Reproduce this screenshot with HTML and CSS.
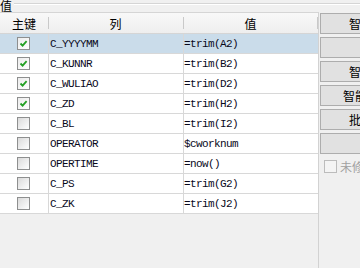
FILE: index.html
```html
<!DOCTYPE html>
<html lang="zh-CN">
<head>
  <meta charset="UTF-8">
  <meta name="viewport" content="width=device-width, initial-scale=1.0">
  <title>值</title>
  <link rel="stylesheet" href="styles.css">
</head>
<body>
  <div class="window">
    <!-- 分组标题 -->
    <div class="legend">
      <span class="legend-title">值</span>
      <span class="legend-line"></span>
    </div>

    <div class="main">
      <!-- 字段映射表 -->
      <div class="grid">
        <div class="grid-head">
          <div class="hcell">主键</div>
          <div class="hcell sep">列</div>
          <div class="hcell sep last">值</div>
        </div>

        <div class="grid-row selected">
          <div class="cell key"><span class="check on"><svg viewBox="0 0 11 11" width="11" height="11"><path d="M2.5 5.5 L4.6 7.6 L8.6 3.2" fill="none" stroke="#23a023" stroke-width="1.8"/></svg></span></div>
          <div class="cell col">C_YYYYMM</div>
          <div class="cell val">=trim(A2)</div>
        </div>
        <div class="grid-row">
          <div class="cell key"><span class="check on"><svg viewBox="0 0 11 11" width="11" height="11"><path d="M2.5 5.5 L4.6 7.6 L8.6 3.2" fill="none" stroke="#23a023" stroke-width="1.8"/></svg></span></div>
          <div class="cell col">C_KUNNR</div>
          <div class="cell val">=trim(B2)</div>
        </div>
        <div class="grid-row">
          <div class="cell key"><span class="check on"><svg viewBox="0 0 11 11" width="11" height="11"><path d="M2.5 5.5 L4.6 7.6 L8.6 3.2" fill="none" stroke="#23a023" stroke-width="1.8"/></svg></span></div>
          <div class="cell col">C_WULIAO</div>
          <div class="cell val">=trim(D2)</div>
        </div>
        <div class="grid-row">
          <div class="cell key"><span class="check on"><svg viewBox="0 0 11 11" width="11" height="11"><path d="M2.5 5.5 L4.6 7.6 L8.6 3.2" fill="none" stroke="#23a023" stroke-width="1.8"/></svg></span></div>
          <div class="cell col">C_ZD</div>
          <div class="cell val">=trim(H2)</div>
        </div>
        <div class="grid-row">
          <div class="cell key"><span class="check"></span></div>
          <div class="cell col">C_BL</div>
          <div class="cell val">=trim(I2)</div>
        </div>
        <div class="grid-row">
          <div class="cell key"><span class="check"></span></div>
          <div class="cell col">OPERATOR</div>
          <div class="cell val">$cworknum</div>
        </div>
        <div class="grid-row">
          <div class="cell key"><span class="check"></span></div>
          <div class="cell col">OPERTIME</div>
          <div class="cell val">=now()</div>
        </div>
        <div class="grid-row">
          <div class="cell key"><span class="check"></span></div>
          <div class="cell col">C_PS</div>
          <div class="cell val">=trim(G2)</div>
        </div>
        <div class="grid-row">
          <div class="cell key"><span class="check"></span></div>
          <div class="cell col">C_ZK</div>
          <div class="cell val">=trim(J2)</div>
        </div>
      </div>

      <!-- 右侧按钮 -->
      <div class="side">
        <button class="btn">智能匹</button>
        <button class="btn"></button>
        <button class="btn">智能选</button>
        <button class="btn">智能匹配</button>
        <button class="btn">批量改</button>
        <button class="btn"></button>
        <label class="opt"><span class="opt-box"></span>未修改的列</label>
      </div>
    </div>
  </div>
</body>
</html>
```

FILE: styles.css
```css
* {
  box-sizing: border-box;
}
html, body {
  margin: 0;
}
body {
  background: #f0f0f0;
  font-family: "Noto Sans CJK SC", "Noto Sans", sans-serif;
  font-size: 12px;
  color: #000;
}
.window {
  width: 360px;
  height: 268px;
  overflow: hidden;
  display: flex;
  flex-direction: column;
}
.legend {
  height: 12px;
  display: flex;
  flex: none;
}
.legend-title {
  line-height: 12px;
  padding-right: 2px;
}
.legend-line {
  flex: 1;
  margin-top: 3px;
  height: 2px;
  border-top: 1px solid #d5d5d5;
  border-bottom: 1px solid #fff;
}
.main {
  flex: 1;
  display: flex;
  gap: 1px;
  min-height: 0;
}
.grid {
  width: 319px;
  flex: none;
  border-top: 1px solid #d5d5d5;
  border-right: 1px solid #d2d2d2;
}
.grid-head, .grid-row {
  display: grid;
  grid-template-columns: 48px 135px 135px;
}
.grid-head {
  height: 21px;
  border-bottom: 1px solid #d5d5d5;
  background: linear-gradient(#f8f8f8, #eeeeee);
}
.hcell {
  display: flex;
  align-items: center;
  justify-content: center;
}
.hcell.sep {
  background: linear-gradient(#c9c9c9, #c9c9c9) 0 50% / 1px 12px no-repeat;
}
.hcell.last {
  background:
    linear-gradient(#c9c9c9, #c9c9c9) 0 50% / 1px 12px no-repeat,
    linear-gradient(#c9c9c9, #c9c9c9) 100% 50% / 1px 12px no-repeat;
}
.grid-row {
  height: 20px;
  background: #fff;
  border-bottom: 1px solid #d8d8d8;
}
.grid-row.selected {
  background: #cadcea;
}
.cell {
  display: flex;
  align-items: center;
  white-space: nowrap;
  overflow: hidden;
  font-family: "Liberation Mono", monospace;
  font-size: 11px;
  letter-spacing: -0.6px;
  color: #08081a;
}
.cell + .cell {
  border-left: 1px solid #d8d8d8;
}
.key {
  padding-left: 17px;
}
.col {
  padding-left: 1px;
}
.check {
  width: 13px;
  height: 13px;
  border: 1px solid #8e8f8f;
  background: linear-gradient(135deg, #dadada, #ffffff);
  display: flex;
  align-items: center;
  justify-content: center;
}
.check.on {
  background: linear-gradient(135deg, #ececec, #ffffff);
}
.side {
  width: 94px;
  flex: none;
  padding-top: 1px;
  display: flex;
  flex-direction: column;
  gap: 3px;
}
.btn {
  height: 21px;
  flex: none;
  padding: 0;
  border: 1px solid #adadad;
  background: #e1e1e1;
  font-family: "Noto Sans CJK SC", "Noto Sans", sans-serif;
  font-size: 12px;
  color: #000;
  white-space: nowrap;
  display: flex;
  align-items: center;
  justify-content: center;
}
.opt {
  height: 19px;
  display: flex;
  align-items: center;
  gap: 3px;
  padding-left: 4px;
  color: #a0a0a0;
  white-space: nowrap;
}
.opt-box {
  width: 13px;
  height: 13px;
  border: 1px solid #bcbcbc;
  background: #f4f4f4;
  flex: none;
}
```
